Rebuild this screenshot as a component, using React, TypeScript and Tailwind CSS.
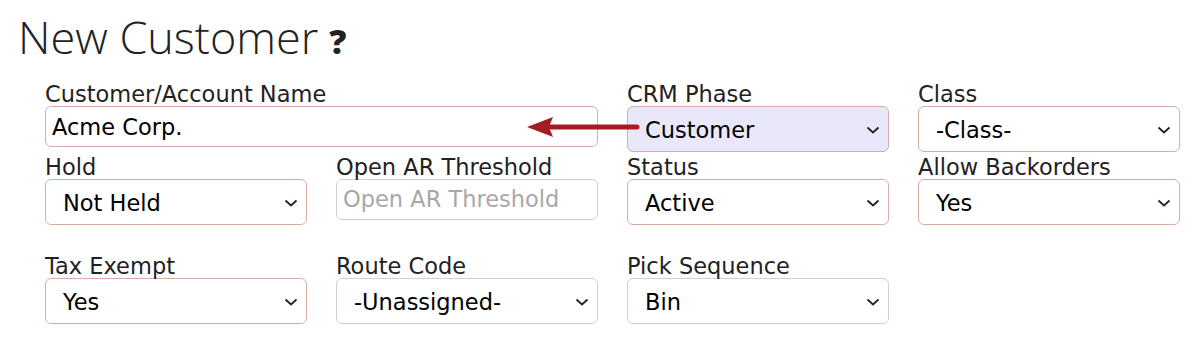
import React from "react";

const font = { fontFamily: '"DejaVu Sans", Verdana, sans-serif' };

const Chevron = () => (
  <svg width="14" height="8" viewBox="0 0 14 8" className="shrink-0 -mt-[1px]">
    <path d="M1.5 1.5 L7 6.5 L12.5 1.5" fill="none" stroke="#222" strokeWidth="1.8" />
  </svg>
);

const Select = ({ value, tone = "rose", bg = "bg-white" }: { value: string; tone?: "rose" | "gray"; bg?: string }) => (
  <div
    className={`flex items-center justify-between h-[46px] rounded-[6px] border pl-[17px] pr-[8px] pt-[3px] text-[22.5px] text-black ${bg} ${
      tone === "rose" ? "border-[#d9aca4]" : "border-[#d0d0d0]"
    }`}
  >
    <span>{value}</span>
    <Chevron />
  </div>
);

const Label = ({ children }: { children: React.ReactNode }) => (
  <div className="text-[22.5px] leading-[24px] text-[#222] h-[24px] whitespace-nowrap">{children}</div>
);

export default function App() {
  return (
    <div className="relative w-[1200px] h-[342px] bg-white" style={font}>
      <div className="pl-[18px] pt-[9px] flex items-baseline">
        <h1 className="text-[45px] leading-[56px] text-[#222] font-light" style={{ fontFamily: '"Open Sans", sans-serif' }}>
          New Customer
        </h1>
        <span className="ml-[11px] text-[34px] leading-[40px] font-extrabold text-[#222]" style={{ fontFamily: '"Open Sans", sans-serif' }}>
          ?
        </span>
      </div>

      <div className="pl-[45px] mt-[17px] grid grid-cols-[262px_262px_262px_262px] gap-x-[29px]">
        <div className="col-span-2">
          <Label>Customer/Account Name</Label>
          <div className="h-[41px] rounded-[6px] border border-[#d9aca4] flex items-center px-[6px] pt-[2px] text-[22.5px] text-black">
            Acme Corp.
          </div>
        </div>
        <div>
          <Label>CRM Phase</Label>
          <Select value="Customer" bg="bg-[#e8e8fa]" />
        </div>
        <div>
          <Label>Class</Label>
          <Select value="-Class-" />
        </div>

        <div className="mt-[3px]">
          <Label>Hold</Label>
          <Select value="Not Held" />
        </div>
        <div className="mt-[3px]">
          <Label>Open AR Threshold</Label>
          <div className="h-[41px] rounded-[6px] border border-[#d0d0d0] flex items-center px-[6px] pt-[1px] text-[22.5px] text-[#a8a8a8] whitespace-nowrap overflow-hidden">
            Open AR Threshold
          </div>
        </div>
        <div className="mt-[3px]">
          <Label>Status</Label>
          <Select value="Active" />
        </div>
        <div className="mt-[3px]">
          <Label>Allow Backorders</Label>
          <Select value="Yes" />
        </div>

        <div className="mt-[29px]">
          <Label>Tax Exempt</Label>
          <Select value="Yes" />
        </div>
        <div className="mt-[29px]">
          <Label>Route Code</Label>
          <Select value="-Unassigned-" tone="gray" />
        </div>
        <div className="mt-[29px]">
          <Label>Pick Sequence</Label>
          <Select value="Bin" tone="gray" />
        </div>
      </div>

      <svg className="absolute left-[520px] top-[112px]" width="130" height="30" viewBox="0 0 130 30">
        <line x1="30" y1="15" x2="117" y2="15" stroke="#a51c24" strokeWidth="5" strokeLinecap="round" />
        <polygon points="7,15 33,5 29,15 33,25" fill="#a51c24" />
      </svg>
    </div>
  );
}
